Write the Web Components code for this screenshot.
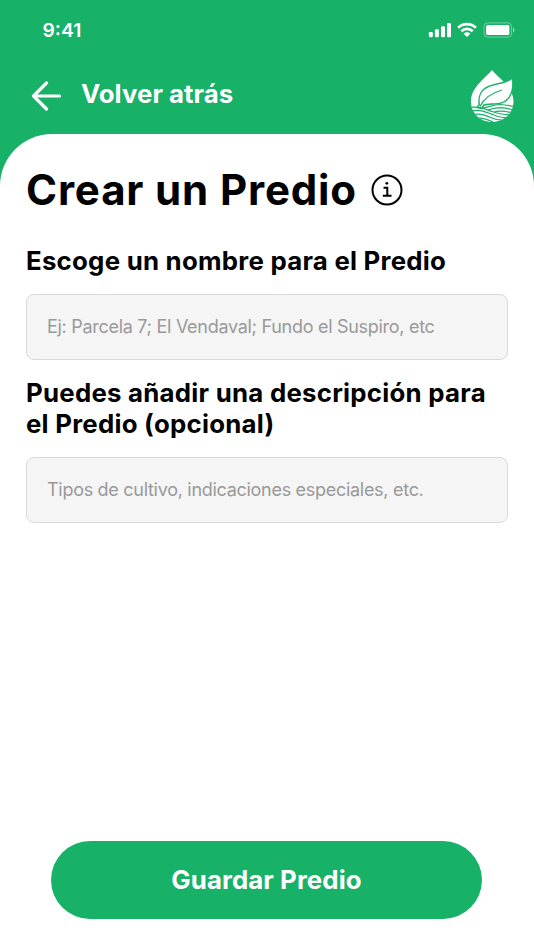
<!DOCTYPE html>
<html lang="es">
<head>
<meta charset="UTF-8">
<meta name="viewport" content="width=device-width, initial-scale=1">
<title>Crear un Predio</title>
<style>
    body {
        margin: 0;
        background: #18b168;
        font-family: Inter, "Liberation Sans", sans-serif;
    }
</style>
</head>
<body>
<predio-app></predio-app>

<script>
class StatusBar extends HTMLElement {
    constructor() {
        super();
        this.shadowDOM = this.attachShadow({ mode: 'open' });
    }

    connectedCallback() {
        this.shadowDOM.innerHTML = `
            <style>
                :host {
                    display: flex;
                    justify-content: space-between;
                    align-items: center;
                    height: 60px;
                    padding: 0 19px 0 42.5px;
                    box-sizing: border-box;
                    color: #ffffff;
                    font-size: 19.3px;
                    font-weight: 600;
                }

                svg { display: block; }
            </style>
            <span><slot></slot></span>
            <svg width="87" height="20" viewBox="428 20 87 20" fill="#fff">
                <rect x="428.8" y="32" width="4" height="5.2" rx="1.2"/>
                <rect x="434.9" y="29.2" width="4" height="8" rx="1.2"/>
                <rect x="441" y="26.2" width="4" height="11" rx="1.2"/>
                <rect x="447" y="23" width="4" height="14.2" rx="1.2"/>
                <g fill="none" stroke="#fff" stroke-width="2.6">
                    <path d="M458.1 27.7a12.8 12.8 0 0 1 17.8 0"/>
                    <path d="M461.3 31.2a8.2 8.2 0 0 1 11.4 0"/>
                </g>
                <path d="M463.6 33.7a4.9 4.9 0 0 1 6.8 0L467 37.1z"/>
                <rect x="484" y="22.9" width="27.6" height="14.2" rx="3.8" fill="none" stroke="#fff" stroke-opacity=".38"/>
                <rect x="486" y="24.9" width="23.4" height="10.1" rx="1.8"/>
                <path d="M513 27.6c2.1.8 2.1 4.1 0 4.9z" opacity=".45"/>
            </svg>
        `;
    }
}

class AppLogo extends HTMLElement {
    constructor() {
        super();
        this.shadowDOM = this.attachShadow({ mode: 'open' });
    }

    connectedCallback() {
        this.shadowDOM.innerHTML = `
            <style>
                :host { display: block; }
                svg { display: block; }
            </style>
            <svg width="46" height="54" viewBox="0 0 46 54">
                <defs>
                    <clipPath id="drop">
                        <path d="M23 1C17 8.500 2 18 2 32.500C2 44 11 53 23 53S44.500 44 44.500 32.500C44.500 18 29 8.500 23 1z"/>
                    </clipPath>
                </defs>
                <g clip-path="url(#drop)">
                    <path d="M0 0h46v54H0z" fill="#fff"/>
                </g>
                <!-- leaf -->
                <path d="M11 36C10 28 11.500 23.500 16.500 20C24 15 34 16.500 43 10.300C43.500 18 43 25.500 37 30.700C30 36 22 33 14 35.500L12.500 38.500L9.500 38z" fill="#fff" stroke="#18b168" stroke-width="3" paint-order="stroke"/>
                <path d="M11 37.500C14 30.500 21 24.500 33 21" fill="none" stroke="#18b168" stroke-width="1.300"/>
                <!-- ploughed field -->
                <g clip-path="url(#drop)" fill="none" stroke="#18b168" stroke-width="1.250">
                    <path d="M1 38.500C11 37 18 41 23 42.500C31 45 37 46.500 43 45.500"/>
                    <path d="M1 42.300C10 40 16 42.500 23 45.300C28 47.500 33 49.500 40 48.500"/>
                    <path d="M2 46.300C9 43.500 16 46 21 48.300C25 50.200 28 51.500 35 51.200"/>
                    <path d="M5 50C11 47.500 17 49.500 24 53"/>
                    <path d="M14 38.800C20 38 24 35.800 31 35.500C37 35.700 41 36.500 46 38"/>
                    <path d="M19 41C24 39.500 27 38.700 32 38.700C37 39 41 40 46 41.500"/>
                    <path d="M25 43C30 41.700 36 42 44 44"/>
                </g>
            </svg>
        `;
    }
}

class NavHeader extends HTMLElement {
    constructor() {
        super();
        this.shadowDOM = this.attachShadow({ mode: 'open' });
    }

    connectedCallback() {
        this.shadowDOM.innerHTML = `
            <style>
                :host {
                    display: flex;
                    align-items: center;
                    height: 74px;
                    padding: 0 19px 0 31px;
                    box-sizing: border-box;
                    color: #ffffff;
                }

                .back {
                    display: flex;
                    flex: 1;
                    align-items: center;
                    gap: 19px;
                    margin-top: -5px;
                    font-size: 25.8px;
                    font-weight: 700;
                    letter-spacing: .05px;
                }

                .back > svg { margin-top: 3px; }
                .back > span { margin-top: -2px; }
                app-logo { margin-top: -2px; }
            </style>
            <div class="back">
                <svg width="31" height="30" viewBox="0 0 31 30" fill="none" stroke="#fff" stroke-width="3.200" stroke-linecap="round" stroke-linejoin="round">
                    <path d="M28.500 15H2.500M15.500 2L2.500 15L15.500 28"/>
                </svg>
                <span><slot></slot></span>
            </div>
            <app-logo></app-logo>
        `;
    }
}

class PageTitle extends HTMLElement {
    constructor() {
        super();
        this.shadowDOM = this.attachShadow({ mode: 'open' });
    }

    connectedCallback() {
        this.shadowDOM.innerHTML = `
            <style>
                :host {
                    display: flex;
                    align-items: center;
                    gap: 14px;
                    height: 50px;
                }

                h1 {
                    margin: 0;
                    font-size: 42px;
                    line-height: 50px;
                    font-weight: 700;
                    letter-spacing: .85px;
                    white-space: nowrap;
                }
            </style>
            <h1><slot></slot></h1>
            <svg width="32" height="32" viewBox="0 0 32 32" fill="none" stroke="#000">
                <circle cx="16" cy="16" r="14.500" stroke-width="2"/>
                <circle cx="15.800" cy="9.300" r="1.400" fill="#000" stroke="none"/>
                <path d="M12.500 13.800H16.300V21.700M11.800 21.700H20.500" stroke-width="2"/>
            </svg>
        `;
    }
}

class FormField extends HTMLElement {
    constructor() {
        super();
        this.shadowDOM = this.attachShadow({ mode: 'open' });
    }

    connectedCallback() {
        this.shadowDOM.innerHTML = `
            <style>
                :host { display: block; }

                .label {
                    margin: 0;
                    font-size: 25.8px;
                    line-height: 31.2px;
                    font-weight: 700;
                    letter-spacing: .25px;
                }

                .box {
                    display: flex;
                    align-items: center;
                    height: 65.6px;
                    margin-top: 18.5px;
                    padding: 0 20px;
                    box-sizing: border-box;
                    background: #f5f5f5;
                    border: 1.3px solid #d9d9d9;
                    border-radius: 8px;
                    color: #999999;
                    font-size: 18px;
                    letter-spacing: -.29px;
                }

                .box > span { margin-top: -1px; }
            </style>
            <p class="label"><slot></slot></p>
            <div class="box"><span><slot name="hint"></slot></span></div>
        `;
    }
}

class PrimaryButton extends HTMLElement {
    constructor() {
        super();
        this.shadowDOM = this.attachShadow({ mode: 'open' });
    }

    connectedCallback() {
        this.shadowDOM.innerHTML = `
            <style>
                :host {
                    display: flex;
                    justify-content: center;
                    align-items: center;
                    height: 78px;
                    padding-bottom: 2px;
                    box-sizing: border-box;
                    border-radius: 39px;
                    background: #18b168;
                    color: #ffffff;
                    font-size: 25.8px;
                    font-weight: 700;
                    letter-spacing: .08px;
                }
            </style>
            <span><slot></slot></span>
        `;
    }
}

class PredioApp extends HTMLElement {
    constructor() {
        super();
        this.shadowDOM = this.attachShadow({ mode: 'open' });
    }

    connectedCallback() {
        this.shadowDOM.innerHTML = `
            <style>
                :host {
                    display: flex;
                    flex-direction: column;
                    height: 950px;
                    overflow: hidden;
                }

                main {
                    display: flex;
                    flex: 1;
                    flex-direction: column;
                    padding: 31px 26px;
                    background: #ffffff;
                    border-radius: 52px 52px 0 0;
                    color: #000000;
                }

                .name { margin-top: 29.7px; }
                .description { margin-top: 16.6px; }
                primary-button { margin: auto 26px 0 25px; }
            </style>
            <status-bar>9:41</status-bar>
            <nav-header>Volver atrás</nav-header>
            <main>
                <page-title>Crear un Predio</page-title>
                <form-field class="name">
                    Escoge un nombre para el Predio
                    <span slot="hint">Ej: Parcela 7; El Vendaval; Fundo el Suspiro, etc</span>
                </form-field>
                <form-field class="description">
                    Puedes añadir una descripción para el Predio (opcional)
                    <span slot="hint">Tipos de cultivo, indicaciones especiales, etc.</span>
                </form-field>
                <primary-button>Guardar Predio</primary-button>
            </main>
        `;
    }
}

customElements.define('status-bar', StatusBar);
customElements.define('app-logo', AppLogo);
customElements.define('nav-header', NavHeader);
customElements.define('page-title', PageTitle);
customElements.define('form-field', FormField);
customElements.define('primary-button', PrimaryButton);
customElements.define('predio-app', PredioApp);
</script>
</body>
</html>
